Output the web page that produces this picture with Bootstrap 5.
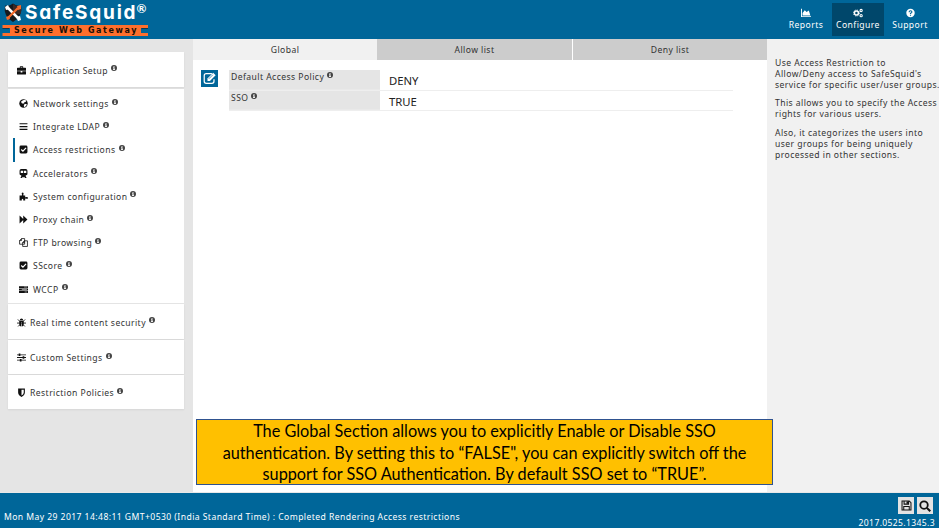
<!DOCTYPE html>
<html lang="en">
<head>
<meta charset="utf-8">
<meta name="viewport" content="width=device-width, initial-scale=1">
<title>SafeSquid - Access restrictions</title>
<link href="https://cdn.jsdelivr.net/npm/bootstrap@5.3.0/dist/css/bootstrap.min.css" rel="stylesheet">
<style>
  body { font-family: "Noto Sans", sans-serif; font-size: 8.6px; line-height: 11px; letter-spacing: .43px; color: #333; height: 528px; }
  svg { display: block; flex: none; }
  .topbar, .statusbar { background: #069; color: #fff; }
  .topbar { height: 39px; }
  .topnav { padding: 3px 3px 0 0; }
  .topnav .nav-link { width: 52px; height: 33px; padding: 5px 0 0; color: #fff; gap: 1px; line-height: 12px; }
  .topnav .nav-link.active { background: #00476b; }
  .side { width: 193px; background: #e5e5e5; padding: 13px 9px 0 8px; }
  .section { background: #fff; height: 35px; padding: 1px 0 0 9px; box-shadow: 0 1px 2px rgba(0,0,0,.07); }
  .section + .section { height: 34px; margin-top: 1px; }
  .subs { background: #fff; margin: 2px 0 1px; height: 214px; padding: 3px 0 0 5px; }
  .subs .entry { height: 23.2px; padding-left: 4px; border-left: 2px solid transparent; }
  .subs .entry.current { border-color: #069; }
  .entry span { margin-left: 4px; padding-top: 2px; white-space: nowrap; }
  .subs .entry span { margin-left: 5px; }
  .entry .info, .field .info { margin: -4px 0 0 3px; color: #444; }
  .ico { color: #111; }
  .main-pane { width: 574px; background: #fff; }
  .tabs { height: 21px; }
  .tabs .nav-link { background: #ccc; color: #333; padding: 0; border-radius: 0; line-height: 23px; height: 21px; text-align: center; }
  .tabs .t1 { width: 184px; background: #f1f1f1; }
  .tabs .t2 { width: 195px; margin-right: 1px; }
  .tabs .t3 { width: 194px; }
  .record { padding: 10px 0 0 8px; }
  .edit { width: 17px; height: 17px; background: #069; margin-right: 11px; color: #fff; }
  .fields { width: 504px; }
  .field { height: 20.5px; border-bottom: 1px solid #eee; }
  .field .name { width: 151px; background: #e5e5e5; padding: 2px 0 0 2px; border-bottom: 1px solid #e9e9e9; }
  .field .info { margin-top: 0; }
  .field .value { font-size: 11.300px; line-height: 21px; padding-left: 9px; letter-spacing: 0; color: #222; }
  .help { background: #f1f1f1; padding: 19px 0 0 8px; white-space: nowrap; }
  .help p { margin: 0 0 8px; line-height: 10.8px; }
  .statusbar { height: 35px; box-shadow: 0 -1px 0 #e8e8e8; }
  .status-text { padding: 0 0 5px 4px; }
  .tools { padding: 4px 6px 0 0; gap: 3px; }
  .tool { width: 16px; height: 17px; background: #e3e3e3; color: #111; }
  .version { letter-spacing: .35px; line-height: 11px; margin-top: 4px; }
  .callout { left: 196px; top: 419px; width: 577px; height: 66px; background: #ffc000; border: 1px solid #2f528f; font: 16.28px/21.7px Lato, Carlito, sans-serif; letter-spacing: 0; color: #000; white-space: nowrap; }
</style>
<style>
  .brand-name { font: 700 19px Inter, sans-serif; font-feature-settings: "cv11"; fill: #fff; }
  .brand-tag { font: 700 8px "DejaVu Sans", sans-serif; fill: #1c1008; }
</style>
<script src="https://cdn.jsdelivr.net/npm/bootstrap@5.3.0/dist/js/bootstrap.bundle.min.js"></script>
</head>
<body class="d-flex flex-column overflow-hidden position-relative">
<svg width="0" height="0" class="position-absolute" aria-hidden="true">
  <defs>
    <symbol id="i-info" viewBox="0 0 16 16"><circle cx="8" cy="8" r="8" fill="currentColor"/><path fill="#fff" d="M6.500 2.500h3v2.200h-3zM5.500 6.200h4v5h1.200v2H5.300v-2h1.200v-3h-1z"/></symbol>
    <symbol id="i-case" viewBox="0 0 16 16"><path fill="currentColor" fill-rule="evenodd" d="M5 3V1.500Q5 .5 6 .5h4q1 0 1 1V3h4q1 0 1 1v4.500H0V4q0-1 1-1zM6.500 3h3V2h-3zM0 9.500h6.500v2h3v-2H16V14q0 1-1 1H1q-1 0-1-1z"/></symbol>
    <symbol id="i-globe" viewBox="0 0 16 16"><circle cx="8" cy="8" r="7.500" fill="currentColor"/><path fill="#fff" d="M7 2l4-.5 2 2-1.500 2L9 6 8 8.500 5 7.500 3.500 5zM10 8.500l4 1-1.500 3-3 2L8.500 12z"/></symbol>
    <symbol id="i-bars" viewBox="0 0 16 16"><path fill="currentColor" d="M1 2h14v2.200H1zM1 7h14v2.200H1zM1 12h14v2.200H1z"/></symbol>
    <symbol id="i-check" viewBox="0 0 16 16"><rect x="1" y="1" width="14" height="14" rx="2.500" fill="currentColor"/><path d="M4 8l3 3 5.500-6" stroke="#fff" stroke-width="2.200" fill="none"/></symbol>
    <symbol id="i-train" viewBox="0 0 16 16"><path fill="currentColor" fill-rule="evenodd" d="M4 0h8q3 0 3 3v6q0 2-2 2H3q-2 0-2-2V3q0-3 3-3zM3 3v4h4.300V3zM8.700 3v4H13V3zM4 11h8v2l1.500 3h-2.500l-1-1.500H6L5 16H2.500L4 13z"/></symbol>
    <symbol id="i-puzzle" viewBox="0 0 16 16"><path fill="currentColor" d="M1 6h4q1-1 0-2-1-3 1.500-3T8 4q-1 1 0 2h3v3q1 1 2 0 3-.5 3 1.500t-3 1.500q-1-1-2 0v3H7.500v-2q-1-2-2.500 0v2H1z"/></symbol>
    <symbol id="i-forward" viewBox="0 0 16 16"><path fill="currentColor" d="M1 1l6.500 6V1L15 8l-7.500 7V9L1 15z"/></symbol>
    <symbol id="i-copy" viewBox="0 0 16 16"><path fill="#fff" stroke="currentColor" stroke-width="1.400" d="M4.500 1H10v10H1V4.500zM4.500 1v3.500H1M9.500 5H15v10H6.500V8zM9.500 5v3h-3"/></symbol>
    <symbol id="i-server" viewBox="0 0 16 16"><path fill="currentColor" d="M0 2h16v3.300H0zM0 6.400h16v3.300H0zM0 10.800h16V14H0z"/><path fill="#fff" d="M9 3h5.500v1H9zM5 7.500h9v1H5zM10 12h4.500v1H10z"/></symbol>
    <symbol id="i-bug" viewBox="0 0 16 16"><path fill="currentColor" d="M5 4q0-3 3-3t3 3zM4 5h8v6q0 4-3.500 4V7h-1v8Q4 15 4 11z"/><path stroke="currentColor" stroke-width="1.500" fill="none" d="M1.500 2.500L5 6M14.500 2.500L11 6M0 9h16M2 15l3-3M14 15l-3-3"/></symbol>
    <symbol id="i-sliders" viewBox="0 0 16 16"><path fill="currentColor" d="M0 2.500h16V4H0zM0 7.300h16v1.500H0zM0 12h16v1.500H0zM3 1h3v4.500H3zM10 5.800h3v4.500h-3zM5 10.500h3V15H5z"/></symbol>
    <symbol id="i-shield" viewBox="0 0 16 16"><path fill="currentColor" fill-rule="evenodd" d="M2 1h12v7q0 5-6 8-6-3-6-8zM8 3v10.500q4-2 4-5.500V3z"/></symbol>
    <symbol id="i-chart" viewBox="0 0 16 16"><path fill="currentColor" d="M0 1h1.500v12H16v1.500H0zM2.500 12V8L6 3.500l3 3L12.500 4 15 12z"/></symbol>
    <symbol id="i-cogs" viewBox="0 0 16 16"><g fill="none" stroke="currentColor"><circle cx="5.500" cy="8" r="3.200" stroke-width="2.400"/><circle cx="5.500" cy="8" r="4.800" stroke-width="1.400" stroke-dasharray="1.900 1.870"/><circle cx="13" cy="4" r="1.800" stroke-width="1.700"/><circle cx="13" cy="12.200" r="1.800" stroke-width="1.700"/></g></symbol>
    <symbol id="i-help" viewBox="0 0 16 16"><circle cx="8" cy="8" r="7.500" fill="currentColor"/><path d="M5.500 6.500q0-2.500 2.500-2.500t2.500 2Q10.500 7.200 8 8.500v1.300M8 11v2" stroke="#069" stroke-width="2" fill="none"/></symbol>
    <symbol id="i-edit" viewBox="0 0 16 16"><path fill="none" stroke="currentColor" stroke-width="1.500" d="M11 2H4Q1.500 2 1.500 4.500v7Q1.500 14 4 14h7q2.500 0 2.500-2.500V9"/><path fill="currentColor" d="M5.500 8l7-7L15.500 4l-7 7h-3z"/><path stroke="#069" stroke-width=".8" d="M7 8.500l5-5"/></symbol>
    <symbol id="i-save" viewBox="0 0 16 16"><path fill="none" stroke="currentColor" stroke-width="1.500" d="M1.500 1.500H12L14.500 4v10.500h-13zM4 14V9.500h8V14M4.500 2v4H11V2"/><path fill="currentColor" d="M8 2h2.500v3.500H8z"/></symbol>
    <symbol id="i-search" viewBox="0 0 16 16"><circle cx="6.700" cy="6.700" r="5" fill="none" stroke="currentColor" stroke-width="2.400"/><path d="M10.500 10.500l4.500 4.500" stroke="currentColor" stroke-width="2.800"/></symbol>
  </defs>
</svg>

<header class="topbar d-flex justify-content-between flex-shrink-0">
  <svg width="152" height="39" viewBox="0 0 152 39" role="img" aria-label="SafeSquid Secure Web Gateway">
    <path d="M5 5.500q4 1 8-2 4 3 8 2 2 11-8 16.500Q3 16.500 5 5.500z" fill="#17191c"/>
    <path d="M13 4q4 3 8 2 1 4-.5 8H13z" fill="#3b2925"/>
    <path d="M8 8l10 10" stroke="#fff" stroke-width="2.500"/><path d="M5 7l3-2 2 4-4 1zM16 17l4-1 1 4-3 1z" fill="#fff"/>
    <path d="M18 8L8 18" stroke="#f26a2b" stroke-width="2.300"/><path d="M17 6l4-1v4l-3 1zM6 17l3-1 1 3-3 1z" fill="#f26a2b"/>
    <text class="brand-name" x="25" y="19" textLength="111">SafeSquid</text>
    <text x="136.500" y="13" font-family="Lato, sans-serif" font-size="12" font-weight="700" fill="#fff" letter-spacing="0">®</text>
    <path d="M2.500 25H148v3h-7v5h7v3H2.500v-3H10v-5H2.500z" fill="#ff6f2c"/>
    <path d="M2.500 28.500H9M141.500 28.500H148" stroke="#12354a" stroke-width="1"/>
    <text class="brand-tag" x="14" y="33.300" textLength="123">Secure Web Gateway</text>
  </svg>
  <nav class="topnav nav flex-nowrap">
    <a class="nav-link d-flex flex-column align-items-center" href="#"><svg width="10" height="10"><use href="#i-chart"/></svg>Reports</a>
    <a class="nav-link active d-flex flex-column align-items-center" href="#"><svg width="10" height="10"><use href="#i-cogs"/></svg>Configure</a>
    <a class="nav-link d-flex flex-column align-items-center" href="#"><svg width="9" height="10"><use href="#i-help"/></svg>Support</a>
  </nav>
</header>

<div class="d-flex flex-grow-1">
  <aside class="side flex-shrink-0">
    <div class="section entry d-flex align-items-center"><svg class="ico" width="9" height="9"><use href="#i-case"/></svg><span>Application Setup</span><svg class="info" width="6" height="6"><use href="#i-info"/></svg></div>
    <div class="subs">
      <div class="entry d-flex align-items-center"><svg class="ico" width="9" height="9"><use href="#i-globe"/></svg><span>Network settings</span><svg class="info" width="6" height="6"><use href="#i-info"/></svg></div>
      <div class="entry d-flex align-items-center"><svg class="ico" width="9" height="9"><use href="#i-bars"/></svg><span>Integrate LDAP</span><svg class="info" width="6" height="6"><use href="#i-info"/></svg></div>
      <div class="entry current d-flex align-items-center"><svg class="ico" width="9" height="9"><use href="#i-check"/></svg><span>Access restrictions</span><svg class="info" width="6" height="6"><use href="#i-info"/></svg></div>
      <div class="entry d-flex align-items-center"><svg class="ico" width="9" height="9"><use href="#i-train"/></svg><span>Accelerators</span><svg class="info" width="6" height="6"><use href="#i-info"/></svg></div>
      <div class="entry d-flex align-items-center"><svg class="ico" width="9" height="9"><use href="#i-puzzle"/></svg><span>System configuration</span><svg class="info" width="6" height="6"><use href="#i-info"/></svg></div>
      <div class="entry d-flex align-items-center"><svg class="ico" width="9" height="9"><use href="#i-forward"/></svg><span>Proxy chain</span><svg class="info" width="6" height="6"><use href="#i-info"/></svg></div>
      <div class="entry d-flex align-items-center"><svg class="ico" width="9" height="9"><use href="#i-copy"/></svg><span>FTP browsing</span><svg class="info" width="6" height="6"><use href="#i-info"/></svg></div>
      <div class="entry d-flex align-items-center"><svg class="ico" width="9" height="9"><use href="#i-check"/></svg><span>SScore</span><svg class="info" width="6" height="6"><use href="#i-info"/></svg></div>
      <div class="entry d-flex align-items-center"><svg class="ico" width="9" height="9"><use href="#i-server"/></svg><span>WCCP</span><svg class="info" width="6" height="6"><use href="#i-info"/></svg></div>
    </div>
    <div class="section entry d-flex align-items-center"><svg class="ico" width="9" height="9"><use href="#i-bug"/></svg><span>Real time content security</span><svg class="info" width="6" height="6"><use href="#i-info"/></svg></div>
    <div class="section entry d-flex align-items-center"><svg class="ico" width="9" height="9"><use href="#i-sliders"/></svg><span>Custom Settings</span><svg class="info" width="6" height="6"><use href="#i-info"/></svg></div>
    <div class="section entry d-flex align-items-center"><svg class="ico" width="9" height="9"><use href="#i-shield"/></svg><span>Restriction Policies</span><svg class="info" width="6" height="6"><use href="#i-info"/></svg></div>
  </aside>

  <main class="main-pane flex-shrink-0">
    <nav class="tabs nav flex-nowrap">
      <a class="nav-link t1" href="#">Global</a>
      <a class="nav-link t2" href="#">Allow list</a>
      <a class="nav-link t3" href="#">Deny list</a>
    </nav>
    <div class="record d-flex">
      <a class="edit d-flex align-items-center justify-content-center" href="#"><svg width="13" height="13"><use href="#i-edit"/></svg></a>
      <div class="fields">
        <div class="field d-flex"><div class="name d-flex">Default Access Policy<svg class="info" width="6" height="6"><use href="#i-info"/></svg></div><div class="value">DENY</div></div>
        <div class="field d-flex"><div class="name d-flex">SSO<svg class="info" width="6" height="6"><use href="#i-info"/></svg></div><div class="value">TRUE</div></div>
      </div>
    </div>
  </main>

  <aside class="help flex-grow-1">
    <p>Use Access Restriction to<br>Allow/Deny access to SafeSquid's<br>service for specific user/user groups.</p>
    <p>This allows you to specify the Access<br>rights for various users.</p>
    <p>Also, it categorizes the users into<br>user groups for being uniquely<br>processed in other sections.</p>
  </aside>
</div>

<footer class="statusbar d-flex justify-content-between flex-shrink-0">
  <div class="status-text align-self-end">Mon May 29 2017 14:48:11 GMT+0530 (India Standard Time) : Completed Rendering Access restrictions</div>
  <div class="d-flex flex-column align-items-end">
    <div class="tools d-flex">
      <span class="tool d-flex align-items-center justify-content-center"><svg width="11" height="11"><use href="#i-save"/></svg></span>
      <span class="tool d-flex align-items-center justify-content-center"><svg width="12" height="12"><use href="#i-search"/></svg></span>
    </div>
    <div class="version pe-1">2017.0525.1345.3</div>
  </div>
</footer>

<div class="callout position-absolute text-center">The Global Section allows you to explicitly Enable or Disable SSO<br>authentication. By setting this to “FALSE", you can explicitly switch off the<br>support for SSO Authentication. By default SSO set to “TRUE”.</div>
</body>
</html>
